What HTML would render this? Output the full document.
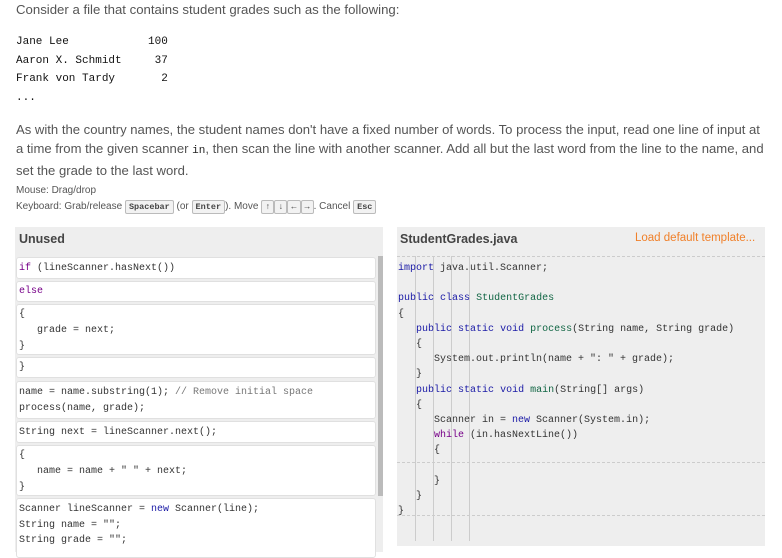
<!DOCTYPE html>
<html><head><style>
body{margin:0;background:#fff;font-family:"Liberation Sans",sans-serif;color:#555;font-size:12px;}
.p{position:absolute;left:16px;white-space:nowrap;}
.m{font-family:"Liberation Mono",monospace;}
.kbd{display:inline-block;font-family:"Liberation Mono",monospace;font-size:8.5px;font-weight:bold;border:1px solid #bbb;border-radius:2px;background:#f2f2f2;padding:0 3px;line-height:12px;color:#444;}
.code{font-family:"Liberation Mono",monospace;font-size:10px;color:#333;white-space:pre;}
.blk{position:absolute;left:16px;width:360px;background:#fff;border:1px solid #e0e0e0;border-radius:3px;box-sizing:border-box;padding:0 0 0 2px;}
.k{color:#1a1aa6}.f{color:#708}.g{color:#116644}.c{color:#777}
.ln{position:absolute;top:256px;height:285px;width:1px;background:#ccc;}
</style></head><body>
<div class="p" style="top:2px;font-size:13.2px;">Consider a file that contains student grades such as the following:</div>
<div class="p m" style="top:33px;font-size:11px;line-height:18.5px;white-space:pre;color:#111;">Jane Lee            100
Aaron X. Schmidt     37
Frank von Tardy       2
...</div>
<div class="p" style="top:120px;font-size:13.1px;line-height:19px;">As with the country names, the student names don't have a fixed number of words. To process the input, read one line of input at<br>a time from the given scanner <span class="m" style="color:#222;font-size:11px">in</span>, then scan the line with another scanner. Add all but the last word from the line to the name, and<br>set the grade to the last word.</div>
<div class="p" style="top:185px;font-size:10px;">Mouse: Drag/drop</div>
<div class="p" style="top:200px;font-size:10px;">Keyboard: Grab/release <span class="kbd">Spacebar</span> (or <span class="kbd">Enter</span>). Move <span class="kbd">↑</span><span class="kbd">↓</span><span class="kbd">←</span><span class="kbd">→</span>. Cancel <span class="kbd">Esc</span></div>

<div style="position:absolute;left:15px;top:227px;width:368px;height:325px;background:#eee;"></div>
<div style="position:absolute;left:19px;top:232px;font-weight:bold;font-size:12.5px;color:#444;">Unused</div>
<div style="position:absolute;left:378px;top:256px;width:5px;height:240px;background:#bbb;"></div>

<div class="blk code" style="top:257px;height:22px;line-height:21px;"><span class="f">if</span> (lineScanner.hasNext())</div>
<div class="blk code" style="top:281px;height:21px;line-height:20px;"><span class="f">else</span></div>
<div class="blk code" style="top:304px;height:51px;line-height:16px;padding-top:2px;">{
   grade = next;
}</div>
<div class="blk code" style="top:357px;height:21px;line-height:20px;">}</div>
<div class="blk code" style="top:381px;height:38px;line-height:16px;padding-top:3px;">name = name.substring(1); <span class="c">// Remove initial space</span>
process(name, grade);</div>
<div class="blk code" style="top:421px;height:22px;line-height:21px;">String next = lineScanner.next();</div>
<div class="blk code" style="top:445px;height:51px;line-height:16px;padding-top:2px;">{
   name = name + " " + next;
}</div>
<div class="blk code" style="top:498px;height:60px;line-height:15.5px;padding-top:3px;">Scanner lineScanner = <span class="k">new</span> Scanner(line);
String name = "";
String grade = "";</div>

<div style="position:absolute;left:397px;top:227px;width:368px;height:319px;background:#eee;"></div>
<div style="position:absolute;left:400px;top:232px;font-weight:bold;font-size:12.5px;color:#444;">StudentGrades.java</div>
<div style="position:absolute;left:635px;top:232px;font-size:11.5px;color:#f0802a;">Load default template...</div>
<div style="position:absolute;left:397px;top:256px;width:368px;border-top:1px dashed #ccc;"></div>
<div style="position:absolute;left:397px;top:462px;width:368px;border-top:1px dashed #ccc;"></div>
<div style="position:absolute;left:397px;top:515px;width:368px;border-top:1px dashed #ccc;"></div>
<div class="ln" style="left:415px"></div><div class="ln" style="left:433px"></div><div class="ln" style="left:451px"></div><div class="ln" style="left:469px"></div>
<div class="code" style="position:absolute;left:398px;top:261px;line-height:15.2px;"><span class="k">import</span> java.util.Scanner;

<span class="k">public</span> <span class="k">class</span> <span class="g">StudentGrades</span>
{
   <span class="k">public</span> <span class="k">static</span> <span class="k">void</span> <span class="g">process</span>(String name, String grade)
   {
      System.out.println(name + ": " + grade);
   }
   <span class="k">public</span> <span class="k">static</span> <span class="k">void</span> <span class="g">main</span>(String[] args)
   {
      Scanner in = <span class="k">new</span> Scanner(System.in);
      <span class="f">while</span> (in.hasNextLine())
      {
      
      }
   }
}</div>
</body></html>
